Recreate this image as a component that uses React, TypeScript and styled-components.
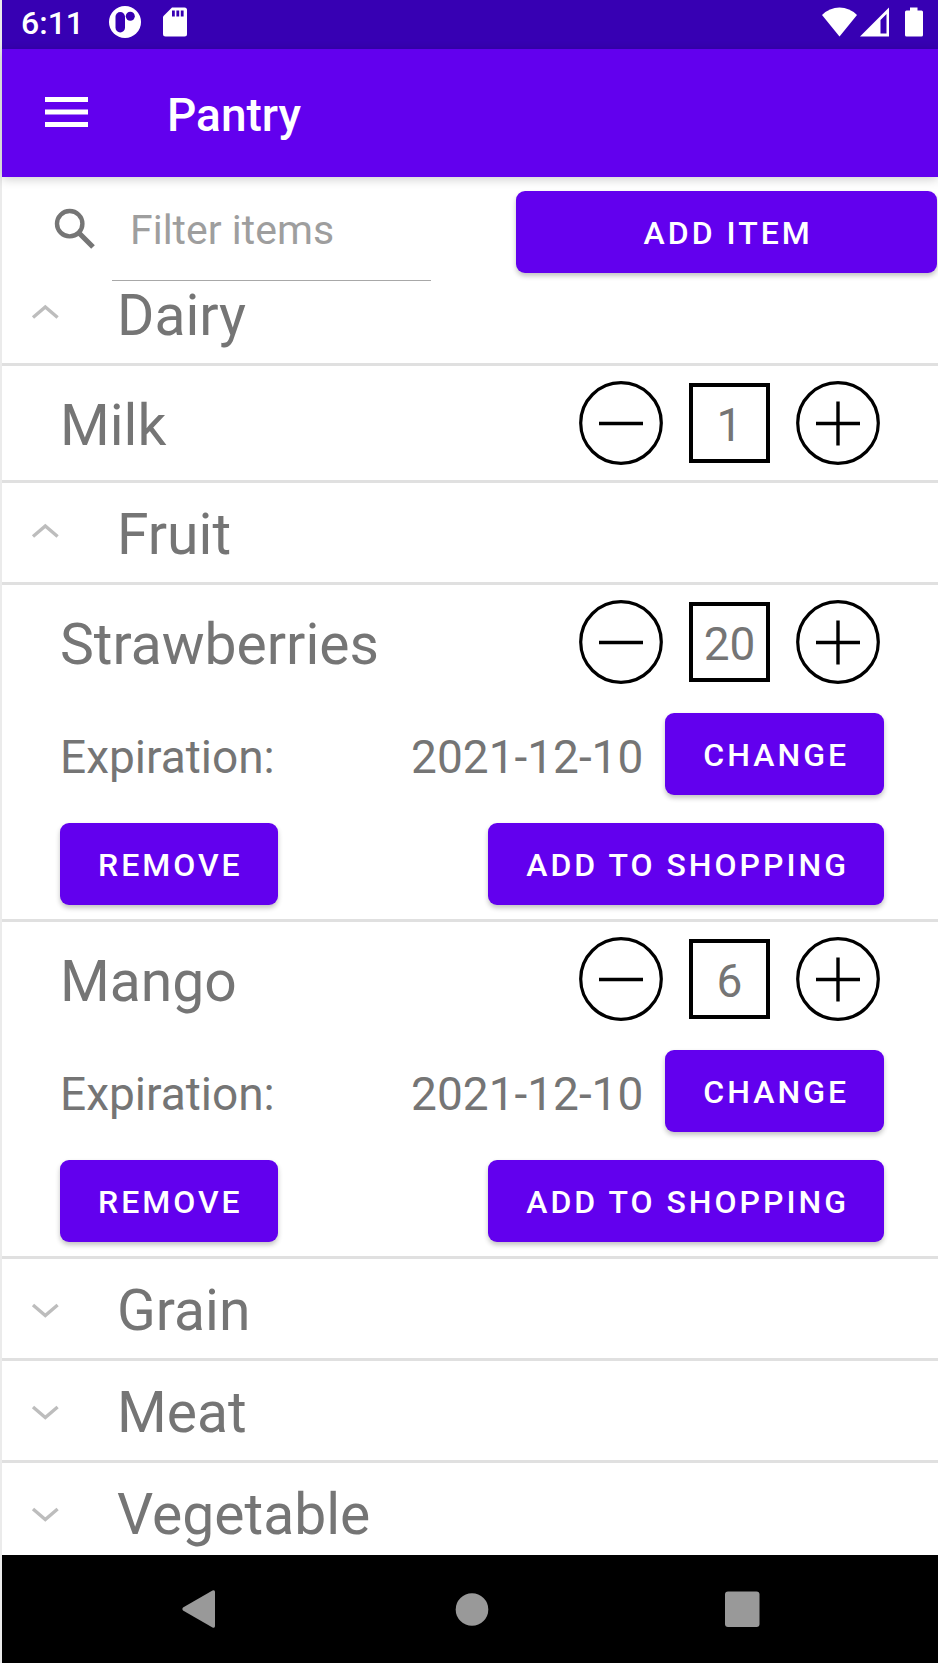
import React, { useState } from "react";
import styled, { createGlobalStyle } from "styled-components";

const color = {
  primary: "#6200ee",
  primaryDark: "#3700b3",
  text: "#757575",
  hint: "#9e9e9e",
  divider: "#e0e0e0",
  chevron: "#bdbdbd",
  nav: "#999999",
};

const GlobalStyle = createGlobalStyle`
  *, *::before, *::after { box-sizing: border-box; }
  body { margin: 0; background: #fff; }
  button, input { font: inherit; color: inherit; margin: 0; }
  button { border: 0; padding: 0; background: none; cursor: pointer; }
  svg { display: block; flex: none; }
`;

const Screen = styled.div`
  display: flex;
  flex-direction: column;
  height: 100vh;
  border-left: 2px solid #ebebeb;
  background: #fff;
  color: ${color.text};
  font-family: Roboto, "Liberation Sans", sans-serif;
`;

const StatusBar = styled.div`
  display: flex;
  flex: none;
  align-items: center;
  justify-content: space-between;
  height: 49px;
  padding: 0 15px 5px 19px;
  background: ${color.primaryDark};
  color: #fff;
  font-size: 32px;
  font-weight: 500;
  line-height: 40px;
`;

const StatusGroup = styled.div<{ $gap: number }>`
  display: flex;
  align-items: center;
  gap: ${(p) => p.$gap}px;
`;

const Clock = styled.time`
  margin-right: 3px;
  padding-top: 2px;
`;

const AppBar = styled.header`
  position: relative;
  display: flex;
  flex: none;
  align-items: center;
  gap: 79px;
  height: 128px;
  padding-left: 42px;
  background: ${color.primary};
  box-shadow: 0 2px 10px rgba(0, 0, 0, 0.2);
  color: #fff;
`;

const Title = styled.h1`
  margin: 0;
  padding-top: 4px;
  font-size: 46px;
  font-weight: 500;
  line-height: 56px;
`;

const Tools = styled.div`
  display: grid;
  flex: none;
  grid-template-columns: minmax(0, 55fr) minmax(0, 45fr);
  align-items: start;
  height: 106px;
  padding-right: 1px;
`;

const SearchField = styled.label`
  display: flex;
  align-items: center;
  gap: 15px;
  padding: 0 85px 0 51px;
`;

const SearchInput = styled.input`
  flex: 1;
  width: 0;
  min-width: 0;
  height: 104px;
  padding: 2px 0 0 18px;
  border: 0;
  border-bottom: 1px solid #a8a8a8;
  border-radius: 0;
  outline: 0;
  background: transparent;
  font-size: 41px;
  &::placeholder { color: ${color.hint}; opacity: 1; }
`;

const Button = styled.button`
  height: 82px;
  padding: 2px 35px 0 38px;
  border-radius: 9px;
  background: ${color.primary};
  box-shadow: 0 3px 5px rgba(0, 0, 0, 0.24);
  color: #fff;
  font-size: 32px;
  font-weight: 500;
  line-height: 40px;
  letter-spacing: 3px;
  text-transform: uppercase;
  white-space: nowrap;
`;

const AddButton = styled(Button)`
  margin-top: 14px;
`;

/* The list is scrolled slightly, its first row running under the filter. */
const List = styled.main`
  flex: 1;
  min-height: 0;
  margin-top: -19px;
  overflow: hidden;
`;

const GroupHeader = styled.button`
  display: flex;
  align-items: center;
  gap: 56px;
  width: 100%;
  height: 102px;
  padding-left: 27px;
  border-bottom: 3px solid ${color.divider};
  text-align: left;
`;

const Name = styled.span`
  padding-top: 5px;
  font-size: 57px;
  line-height: 68px;
`;

const Item = styled.article`
  padding: 0 54px 0 58px;
  border-bottom: 3px solid ${color.divider};
`;

const ItemLine = styled.div<{ $tall?: boolean }>`
  display: flex;
  align-items: center;
  justify-content: space-between;
  height: ${(p) => (p.$tall ? 114 : 110)}px;
`;

const Stepper = styled.div`
  display: flex;
  align-items: center;
  gap: 26px;
  padding-right: 4px;
`;

const Quantity = styled.output`
  display: flex;
  align-items: center;
  justify-content: center;
  width: 81px;
  height: 80px;
  padding-top: 4px;
  border: 4px solid #000;
  font-size: 46px;
  line-height: 56px;
`;

const Detail = styled.span`
  padding-top: 6px;
  font-size: 46px;
  line-height: 56px;
`;

const DateGroup = styled.div`
  display: flex;
  align-items: center;
  gap: 22px;
`;

const NavBar = styled.nav`
  display: flex;
  flex: none;
  align-items: center;
  justify-content: center;
  gap: 176px;
  height: 108px;
  background: #000;
`;

const NavButton = styled.button`
  display: flex;
  justify-content: center;
  width: 96px;
`;

const StepIcon = ({ plus }: { plus?: boolean }) => (
  <svg width="84" height="84" viewBox="0 0 84 84" fill="none" stroke="#000">
    <circle cx="42" cy="42" r="40.3" strokeWidth="3.2" />
    <path d={plus ? "M20 42.500H64M42 20.500V64.500" : "M20 42.500H64"} strokeWidth="3.400" />
  </svg>
);

const Chevron = ({ open }: { open: boolean }) => (
  <svg width="32" height="32" viewBox="0 0 32 32" fill="none" stroke={color.chevron} strokeWidth="3.4">
    <path d={open ? "M4 19.500L16.300 9L28.600 19.500" : "M4 12L16.300 22.500L28.600 12"} />
  </svg>
);

type Food = { name: string; quantity: number; expiration?: string };

const FoodItem = ({ food }: { food: Food }) => {
  const [quantity, setQuantity] = useState(food.quantity);
  return (
    <Item>
      <ItemLine $tall>
        <Name>{food.name}</Name>
        <Stepper>
          <button aria-label={`Decrease ${food.name}`} onClick={() => setQuantity(Math.max(0, quantity - 1))}>
            <StepIcon />
          </button>
          <Quantity>{quantity}</Quantity>
          <button aria-label={`Increase ${food.name}`} onClick={() => setQuantity(quantity + 1)}>
            <StepIcon plus />
          </button>
        </Stepper>
      </ItemLine>
      {food.expiration && (
        <>
          <ItemLine>
            <Detail>Expiration:</Detail>
            <DateGroup>
              <Detail>{food.expiration}</Detail>
              <Button>Change</Button>
            </DateGroup>
          </ItemLine>
          <ItemLine>
            <Button>Remove</Button>
            <Button>Add to shopping</Button>
          </ItemLine>
        </>
      )}
    </Item>
  );
};

const Group = ({ name, foods = [] }: { name: string; foods?: Food[] }) => {
  const [open, setOpen] = useState(foods.length > 0);
  return (
    <section>
      <GroupHeader aria-expanded={open} onClick={() => setOpen(!open)}>
        <Chevron open={open} />
        <Name>{name}</Name>
      </GroupHeader>
      {open && foods.map((food) => <FoodItem key={food.name} food={food} />)}
    </section>
  );
};

const groups: { name: string; foods?: Food[] }[] = [
  { name: "Dairy", foods: [{ name: "Milk", quantity: 1 }] },
  {
    name: "Fruit",
    foods: [
      { name: "Strawberries", quantity: 20, expiration: "2021-12-10" },
      { name: "Mango", quantity: 6, expiration: "2021-12-10" },
    ],
  },
  { name: "Grain" },
  { name: "Meat" },
  { name: "Vegetable" },
];

export default function App() {
  return (
    <>
      <GlobalStyle />
      <Screen>
        <StatusBar>
          <StatusGroup $gap={22}>
            <Clock>6:11</Clock>
            <svg width="32" height="32" viewBox="0 0 32 32">
              <circle cx="16" cy="16" r="16" fill="#fff" />
              <rect x="6.500" y="6" width="9.500" height="20.500" rx="4.700" fill={color.primaryDark} />
              <circle cx="21.300" cy="10.300" r="4.500" fill={color.primaryDark} />
            </svg>
            <svg width="24" height="30" viewBox="0 0 24 30">
              <path d="M9 0.500H21.500Q24 0.500 24 3V27Q24 29.500 21.500 29.500H2.500Q0 29.500 0 27V9.500Z" fill="#fff" />
              <path d="M9 3.500h2.800v6H9zM13.400 3.500h2.800v6h-2.800zM17.800 3.500h2.800v6h-2.800z" fill={color.primaryDark} />
            </svg>
          </StatusGroup>
          <StatusGroup $gap={3}>
            <svg width="35" height="30" viewBox="0 0 35 30">
              <path d="M0 8Q7.500 0.500 17.500 0.500T35 8L17.500 29.500Z" fill="#fff" />
            </svg>
            <svg width="29" height="30" viewBox="0 0 29 30">
              <path d="M29 0.500V29.500H0ZM26.500 7L20.500 13V26.500H26.500Z" fill="#fff" fillRule="evenodd" />
            </svg>
            <svg width="31" height="30" viewBox="0 0 31 30">
              <path d="M18 0.500H25.500V3.500H29.500Q31 3.500 31 5V28Q31 29.500 29.500 29.500H14.500Q13 29.500 13 28V5Q13 3.500 14.500 3.500H18Z" fill="#fff" />
            </svg>
          </StatusGroup>
        </StatusBar>
        <AppBar>
          <button aria-label="Open menu">
            <svg width="44" height="32" viewBox="0 0 44 32">
              <path d="M1 0h43v5H1zM1 12.500h43v5H1zM1 25h43v5H1z" fill="#fff" />
            </svg>
          </button>
          <Title>Pantry</Title>
        </AppBar>
        <Tools>
          <SearchField>
            <svg width="44" height="44" viewBox="0 0 44 44" fill="none" stroke={color.text}>
              <circle cx="16.700" cy="16.700" r="12.700" strokeWidth="4.400" />
              <path d="M26 26L40 40" strokeWidth="5.200" />
            </svg>
            <SearchInput type="text" placeholder="Filter items" aria-label="Filter items" />
          </SearchField>
          <AddButton>Add item</AddButton>
        </Tools>
        <List>
          {groups.map((group) => (
            <Group key={group.name} {...group} />
          ))}
        </List>
        <NavBar>
          <NavButton aria-label="Back">
            <svg width="40" height="40" viewBox="0 0 40 40">
              <path d="M37 3V37Q37 39.500 34.500 38.500L5 21.500Q3.500 20 5 18.500L34.500 1.500Q37 0.500 37 3Z" fill={color.nav} />
            </svg>
          </NavButton>
          <NavButton aria-label="Home">
            <svg width="40" height="40" viewBox="0 0 40 40">
              <circle cx="22" cy="20.500" r="16.300" fill={color.nav} />
            </svg>
          </NavButton>
          <NavButton aria-label="Recent apps">
            <svg width="40" height="40" viewBox="0 0 40 40">
              <rect x="3" y="2.500" width="34.500" height="35.500" rx="3" fill={color.nav} />
            </svg>
          </NavButton>
        </NavBar>
      </Screen>
    </>
  );
}
